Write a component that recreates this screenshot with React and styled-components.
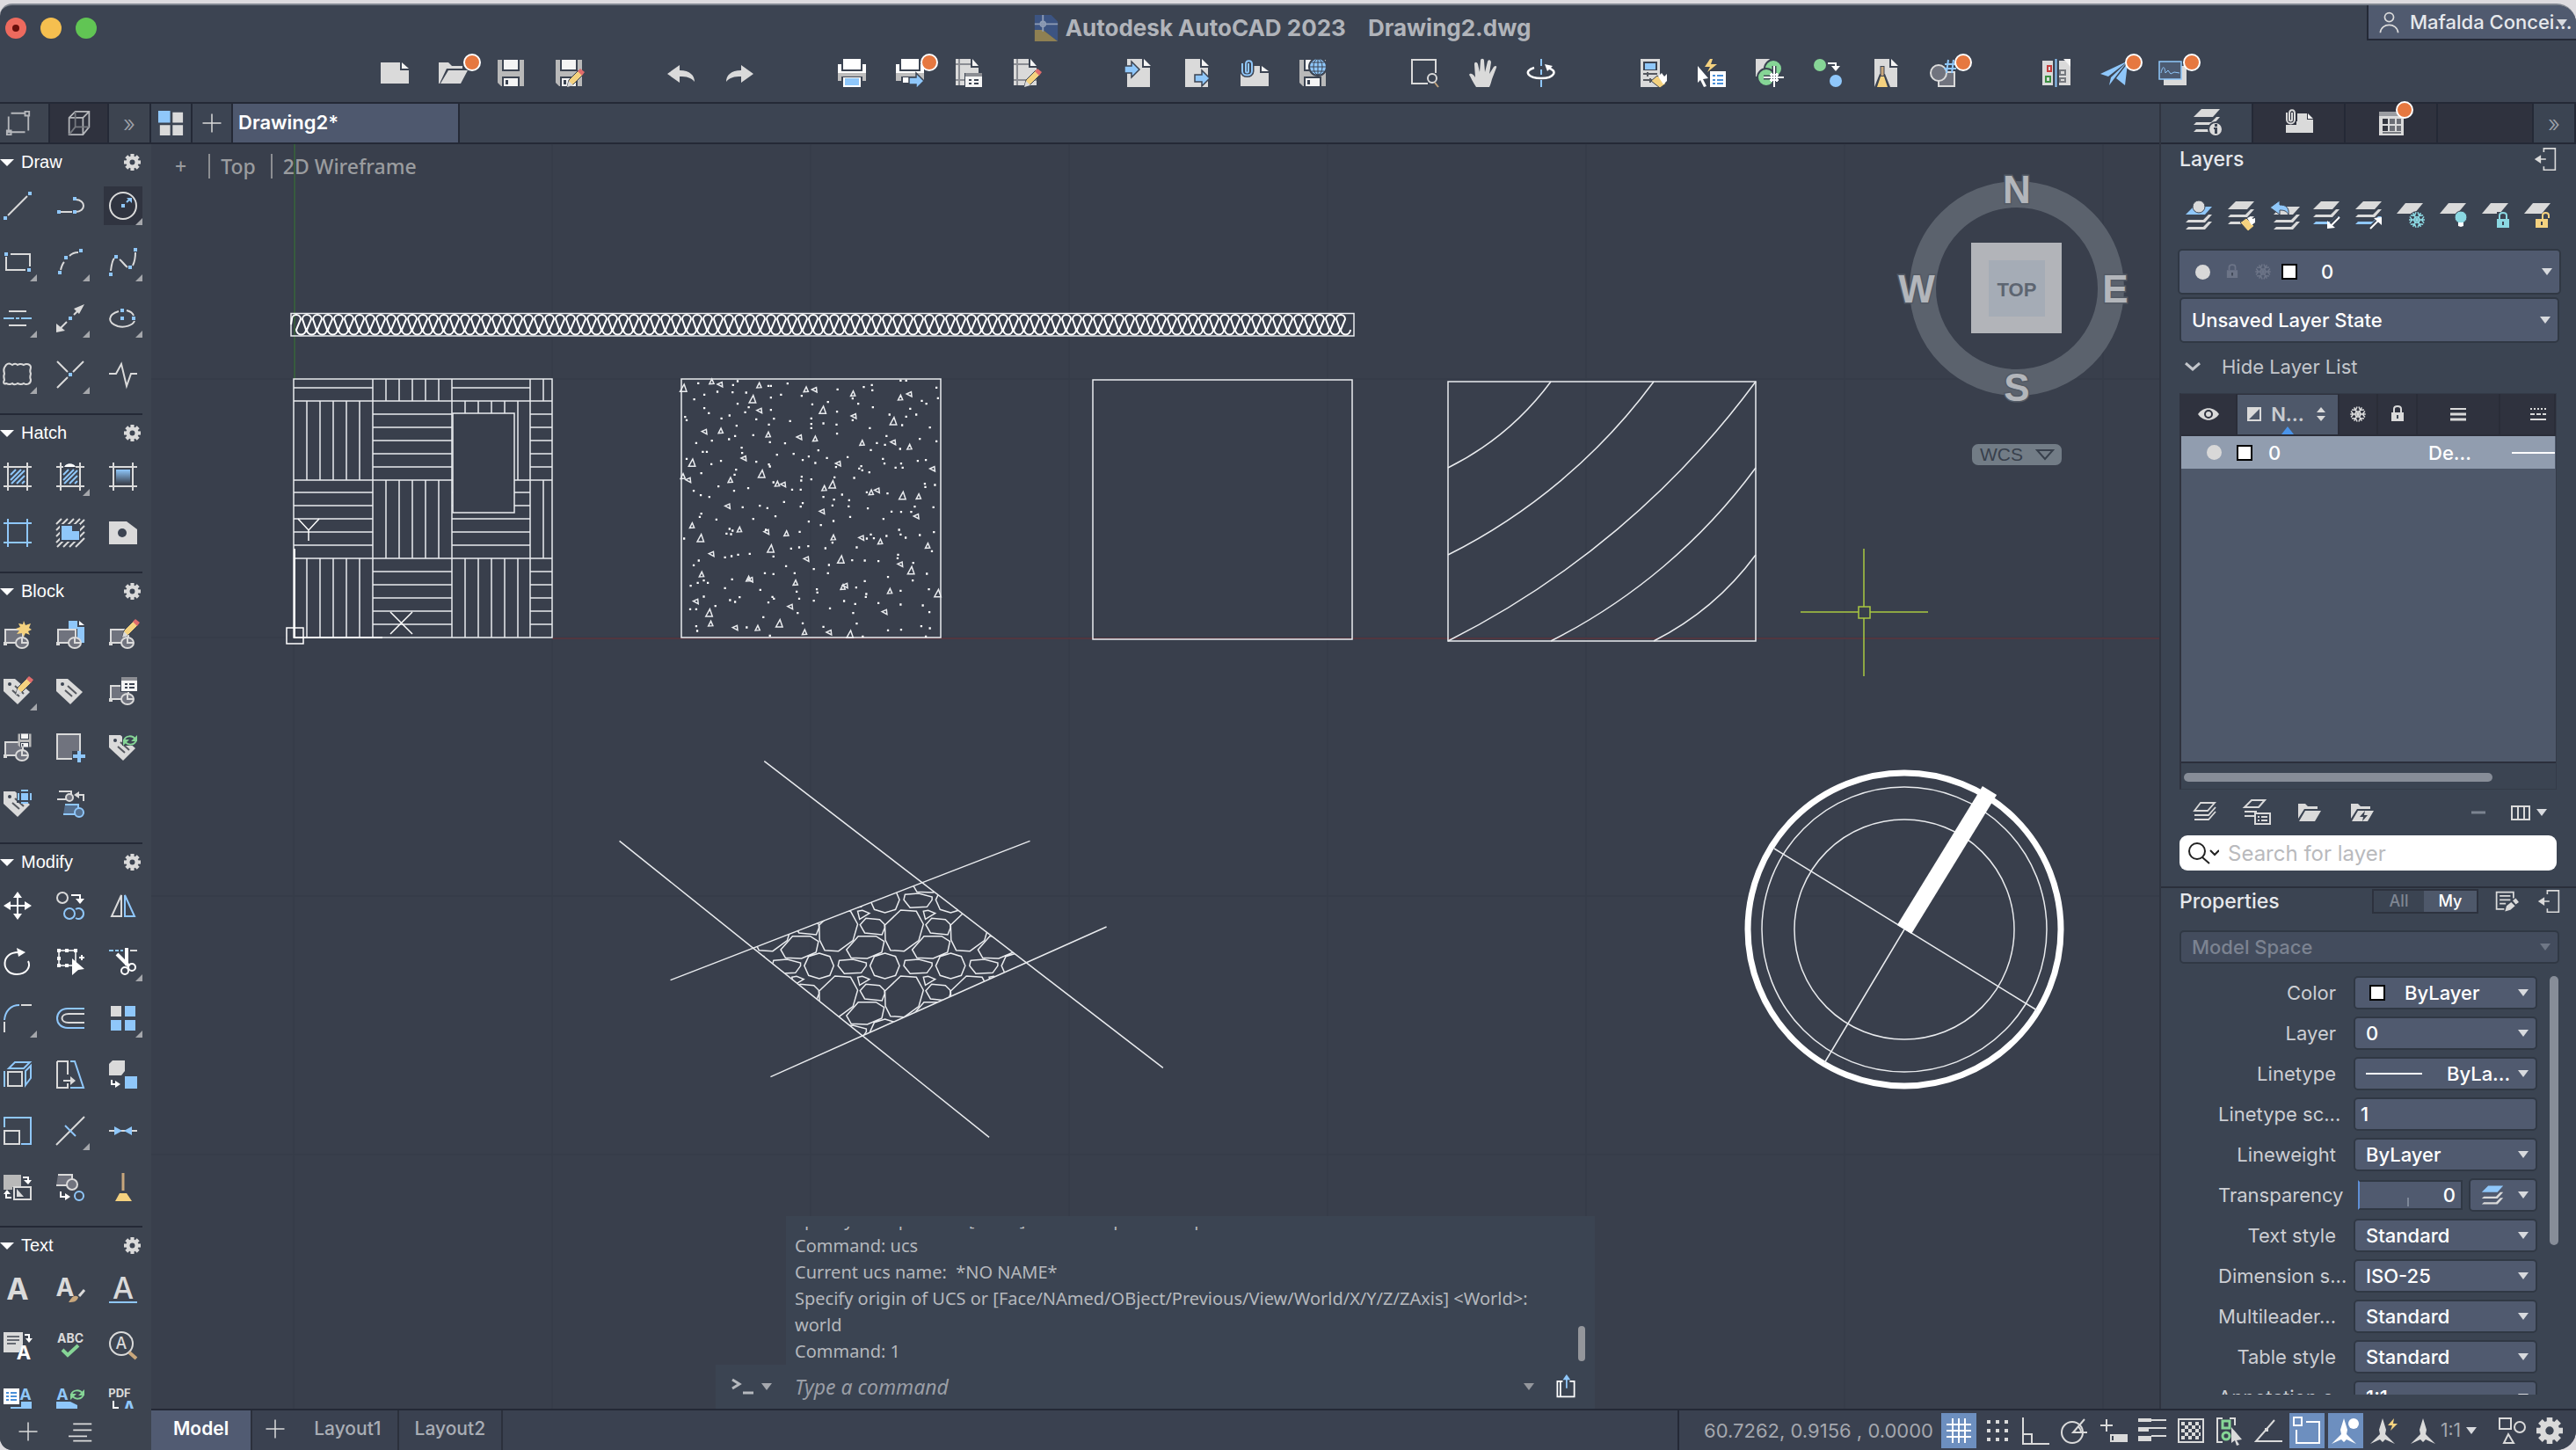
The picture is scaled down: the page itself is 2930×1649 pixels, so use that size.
import React from "react";
import styled, { createGlobalStyle, css } from "styled-components";

const W = "#dadada";
const B = "#8fc7fa";
const Y = "#f5d27f";
const R = "#e06c6c";
const G = "#86d596";
const T = "#8bd8e2";
const D = "#3c4452";
const M = "#70737e";

const GlobalStyle = createGlobalStyle`
  * {
    box-sizing: border-box;
  }
  body {
    margin: 0;
    background: #dddbdf;
    font-family: Inter, sans-serif;
    overflow: hidden;
  }
  button,
  input,
  select {
    font: inherit;
    color: inherit;
    margin: 0;
    padding: 0;
    border: 0;
    background: none;
  }
  svg {
    display: block;
  }
`;

/* ---------- icons ---------- */

const F = ({ d, c = W }) => <path d={d} fill={c} stroke="none" />;
const S = ({ d, c = W, w = 2 }) => <path d={d} fill="none" stroke={c} strokeWidth={w} />;
const Dots = ({ at, c = B }) =>
  at.map(([x, y]) => (
    <rect key={`${x}-${y}`} x={x - 2} y={y - 2} width="4" height="4" fill={c} stroke="none" />
  ));
const Letter = ({ x, y, size, c = W, bold, children }) => (
  <text
    x={x}
    y={y}
    fontSize={size}
    fill={c}
    stroke="none"
    fontWeight={bold ? 700 : 500}
    textAnchor="middle"
    fontFamily="Inter, sans-serif"
  >
    {children}
  </text>
);

const Floppy = () => (
  <>
    <F d="M1 1h30v30H5l-4-4z" c="#b9b9b9" />
    <F d="M6 1h20v13H6z" c={D} />
    <F d="M8 1h16v11H8z" c="#f4f4f4" />
    <F d="M6 20h20v11H6z" c={D} />
    <F d="M8 22h16v9H8z" c="#f4f4f4" />
    <F d="M10 24h3v5h-3z" c={D} />
  </>
);
const Page = () => (
  <>
    <F d="M3 0h17v10h9v22H3z" />
    <F d="M22 0l8 8h-8z" c="#f4f4f4" />
  </>
);
const Sheet = () => (
  <>
    <F d="M2 0h17v10h9v20H2z" />
    <S d="M6 0v30M2 6h17M2 24h26" c="#8b8d93" w={2} />
    <F d="M21 0l7 8h-7z" c="#f4f4f4" />
  </>
);
const Pencil = () => (
  <>
    <path d="M14 32l2-8L27 13l5 5L21 29z" fill={Y} stroke={D} strokeWidth="1" />
    <F d="M26 14l3-3 5 4-3 4z" c={R} />
    <F d="M14 32l2-7 5 5z" />
  </>
);
const Printer = () => (
  <>
    <F d="M6 0h20v12H6z" c="#fff" />
    <F d="M0 6h4v8h24V6h4v10H0z" c="#fff" />
    <F d="M0 16h32v9H0z" c="#bdbdbd" />
  </>
);
const RightArrow = ({ x, y }) => (
  <path
    d={`M${x} ${y - 4}h8v-5l9 9-9 9v-5h-8z`}
    fill={B}
    stroke={D}
    strokeWidth="1.5"
  />
);
const Stack = ({ top = W, mid = W, low = W }) => (
  <>
    <F d="M10 0h21l-8 9H1z" c={top} />
    <F d="M27 9h4l-8 9H1l3-3h17z" c={mid} />
    <F d="M27 17h4l-8 9H1l3-3h17z" c={low} />
  </>
);
const BlockShape = ({ c = W }) => (
  <>
    <path d="M2 10h20v15H2z" fill={M} stroke={c} strokeWidth="2" />
    <ellipse cx="21" cy="25" rx="7" ry="6" fill={M} stroke={c} strokeWidth="2" />
    <S d="M21 19v6h7" c={c} />
    <Dots at={[[2, 26]]} c={c} />
  </>
);
const Tag = () => (
  <>
    <F d="M0 2h13l17 15-14 14L0 16z" />
    <circle cx="7" cy="8" r="2" fill={D} stroke="none" />
    <S d="M13 10l10 9M10 15l8 7" c="#55585f" />
  </>
);
const Refresh = () => (
  <>
    <S d="M17 8c2-6 10-6 13-1M31 8c-2 6-10 6-13 1" c={G} />
    <F d="M32 2v7h-7zM16 14V7h7z" c={G} />
  </>
);
const HatchFrame = ({ c = W }) => <S d="M5 0v32M27 0v32M0 5h32M0 27h32" c={c} />;
const Flake = ({ x, y, r, c }) => (
  <g transform={`translate(${x} ${y}) scale(${r / 10})`} stroke={c} strokeWidth="1.7" fill="none">
    {[30, 90, 150].map((a) => (
      <path key={a} d="M0-10V10M-4-9L0-6L4-9M-4 9L0 6L4 9" transform={`rotate(${a})`} />
    ))}
    <path d="M4 0L2 3.500H-2L-4 0L-2-3.500H2z" />
  </g>
);
const Lock = ({ x, y, c, open }) => (
  <g transform={`translate(${x} ${y})`}>
    <F d="M0 7h14v10H0z" c={c} />
    <S d={open ? "M8 7V3c0-4 7-4 7 0v3" : "M3 7V3c0-4 8-4 8 0v4"} c={c} />
    <F d="M6 10h2v4H6z" c={D} />
  </g>
);
const Arrowhead = ({ c = W }) => <F d="M16 0l4 13-1 5 11 11-11-5-3 3-3-3-11 5 11-11-1-5z" c={c} />;
const Gear = () => (
  <>
    {[0, 45, 90, 135].map((a) => (
      <rect key={a} x="12.5" y="0" width="7" height="32" fill={W} stroke="none" transform={`rotate(${a} 16 16)`} />
    ))}
    <circle cx="16" cy="16" r="12" fill={W} stroke="none" />
    <circle cx="16" cy="16" r="5" fill={D} stroke="none" />
  </>
);

const glyphs = {
  newFile: (
    <>
      <F d="M0 4h22v9h10v15H0z" />
      <F d="M24 4l8 7h-8z" c="#f4f4f4" />
    </>
  ),
  open: (
    <>
      <F d="M0 4h11l4 4h12v3H9L1 28H0z" />
      <F d="M11 13h22l-8 15H2z" />
    </>
  ),
  save: <Floppy />,
  saveAs: (
    <>
      <Floppy />
      <Pencil />
    </>
  ),
  undo: <F d="M0 17L14 7v6c12 0 17 6 17 13-4-5-9-6-17-6v7z" />,
  redo: <F d="M32 17L18 7v6C6 13 1 19 1 26c4-5 9-6 17-6v7z" />,
  print: (
    <>
      <Printer />
      <F d="M4 20h24v12H4z" c={D} />
      <F d="M6 21h20v11H6z" c="#fff" />
      <F d="M8 22h16v8H8z" c={B} />
    </>
  ),
  plot: (
    <>
      <Printer />
      <F d="M6 20h20v7H6z" c={D} />
      <F d="M8 21h12v6H8z" c="#fff" />
      <RightArrow x={15} y={25} />
    </>
  ),
  batch: (
    <>
      <Sheet />
      <F d="M12 16h20v16H12z" c={D} />
      <F d="M13 16h19v4H13z" c="#8b8d93" />
      <F d="M13 20h19v12H13z" c="#f4f4f4" />
      <S d="M17 24h3M23 24h5M17 28h3M23 28h5" c={D} />
    </>
  ),
  pageSetup: (
    <>
      <Sheet />
      <Pencil />
    </>
  ),
  importFile: (
    <>
      <Page />
      <RightArrow x={0} y={12} />
    </>
  ),
  exportFile: (
    <>
      <Page />
      <RightArrow x={14} y={22} />
    </>
  ),
  attach: (
    <>
      <F d="M0 16h14V8h8v8h10v15H0z" />
      <F d="M24 8l8 6h-8z" c="#f4f4f4" />
      <path d="M9 5v9c0 2-3 2-3 0V6c0-5 7-5 7 0v8c0 6-11 6-11 0V5" stroke={D} strokeWidth="5" />
      <S d="M9 5v9c0 2-3 2-3 0V6c0-5 7-5 7 0v8c0 6-11 6-11 0V5" c={B} />
    </>
  ),
  saveWeb: (
    <>
      <Floppy />
      <circle cx="22" cy="9" r="10" fill={B} stroke={D} strokeWidth="2" />
      <S d="M22 0v18M13 9h18M15 4h14M15 14h14" c={D} w={1} />
      <ellipse cx="22" cy="9" rx="5" ry="9" stroke={D} strokeWidth="1" />
    </>
  ),
  zoomWindow: (
    <>
      <S d="M19 28H1V1h27v15" />
      <circle cx="24" cy="22" r="5" />
      <S d="M27 27l4 5" c="#c2a37c" />
    </>
  ),
  pan: (
    <F d="M8 32C4 26 2 21 0 18c1-2 4-2 7 3L6 6c0-3 3-3 4 0l2 9L13 2c0-3 4-3 4 0l1 13 3-12c1-3 4-2 4 1l-2 13 5-8c2-2 4-1 3 1l-5 13c-1 4-2 7-3 9z" />
  ),
  orbit: (
    <>
      <S d="M16 0v8M16 12v6M16 24v8" c={B} />
      <S d="M8 10C-5 14 1 22 16 22s20-9 7-12" c="#fff" w={2.5} />
      <F d="M20 6l9 2-6 6z" c="#fff" />
    </>
  ),
  properties: (
    <>
      <F d="M1 0h22v32H1z" />
      <F d="M4 3h16v10H4z" c={D} />
      <F d="M6 5h12v7H6z" c={B} />
      <S d="M4 17h16M4 24h10M9 15v5M12 22v5" c="#55585f" />
      <path d="M13 25l7-6 10 9-7 5z" fill={Y} stroke={D} strokeWidth="1" />
      <F d="M21 20l4-4 3 4 3-3v8l-4 4z" c="#fff" />
    </>
  ),
  quickSelect: (
    <>
      <F d="M14 14h18v18H14z" c="#fff" />
      <S d="M17 19h3M17 24h3M17 28h3M22 19h7M22 24h7M22 28h7" c="#4a90d9" />
      <F d="M0 8l12 14-6 1 4 8-3 1-4-8-3 3z" c="#fff" />
      <F d="M17 0h-3L8 9h6l-3 6L22 6h-7z" c={Y} />
    </>
  ),
  group: (
    <>
      <F d="M0 0h16L3 20H0z" />
      <circle cx="20" cy="11" r="10" fill={G} stroke={D} />
      <circle cx="12" cy="21" r="10" fill={G} stroke={D} />
      <S d="M21 8v24M9 21h23" c={D} w={5} />
      <S d="M21 8v24M9 21h23M18 16v10M24 16v10M16 18h10M16 24h10" c="#fff" />
    </>
  ),
  copyBlock: (
    <>
      <circle cx="7" cy="7" r="7" fill={G} stroke="none" />
      <circle cx="25" cy="25" r="7" fill={B} stroke="none" />
      <S d="M16 5h9v4" c="#fff" />
      <F d="M20 8h10l-5 6z" c="#fff" />
    </>
  ),
  purge: (
    <>
      <Page />
      <S d="M12 8v12" c={D} w={5} />
      <F d="M9 17h6l6 15H3z" c={D} />
      <S d="M12 9v10" c="#c9a77c" w={3} />
      <F d="M10 20h4l4 12H6z" c={Y} />
    </>
  ),
  count: (
    <>
      <rect x="10" y="15" width="18" height="16" fill={M} />
      <circle cx="10" cy="16" r="9" fill={M} />
      <S d="M21 1l-2 15M27 1l-2 15M17 6h14M16 11h14" c={B} />
    </>
  ),
  compare: (
    <>
      <F d="M0 2h32v28H0z" />
      <S d="M6 8h4v6H6z" c="#c43d3d" />
      <S d="M4 20h5v6H4z" c="#3c8f42" />
      <S d="M20 13h6v5h-6zM20 22h6v4h-6z" c="#777a80" />
      <F d="M12 2h7v28h-7z" c={D} />
      <S d="M15.5 0v32" c={B} />
      <F d="M24 0h8v9z" c="#f4f4f4" />
    </>
  ),
  share: <F d="M0 17L32 2 9 20zM12 21L30 4l-14 18-6 8zM18 22L31 5l-3 25z" c={B} />,
  activity: (
    <>
      <F d="M6 8h26v22H6z" />
      <rect x="1" y="3" width="25" height="20" fill="#4c5a70" stroke={B} strokeWidth="1.5" />
      <S d="M3 16c2-9 4-8 5 0l3-3 3 4 4-2 6 1" c={B} w={1} />
    </>
  ),
  drafting: <S d="M7 5h17M28 8v18M24 28H4V9M24 3h5v5h-5zM2 26h5v5H2z" c="#b5b7bb" />,
  cube: (
    <>
      <S d="M3 9l8-8h18v20l-8 10H3zM3 9h18v22M21 9l8-8" c="#b5b7bb" />
      <S d="M11 1v20h18M11 21l-8 10" c="#777a80" />
    </>
  ),
  startGrid: (
    <>
      <F d="M0 0h15v15H0z" c={B} />
      <F d="M18 2h13v13H18zM2 18h13v13H2zM18 18h13v13H18z" />
    </>
  ),
  plus: <S d="M16 2v28M2 16h28" />,
  line: (
    <>
      <S d="M5 27L27 5" />
      <Dots at={[[2, 30], [30, 2]]} />
    </>
  ),
  polyline: (
    <>
      <S d="M5 23h13M22 9c12 0 12 14 0 14" />
      <Dots at={[[3, 23], [21, 23], [21, 8]]} />
    </>
  ),
  circle: (
    <>
      <circle cx="16" cy="16" r="15" />
      <Dots at={[[16, 16]]} />
      <S d="M20 12l3-3" c={B} />
      <F d="M20 7h6v6z" c={B} />
    </>
  ),
  rect: (
    <>
      <S d="M3 10v15h22M8 7h22v14" />
      <Dots at={[[3, 7], [29, 25]]} />
    </>
  ),
  arc: (
    <>
      <S d="M5 25c1-4 2-7 4-9M15 9c3-3 6-4 10-4" />
      <Dots at={[[4, 28], [11, 11], [28, 3]]} />
    </>
  ),
  spline: (
    <>
      <S d="M2 26c1-8 2-13 4-14M12 13c3 2 5 6 9 9M27 20c2-4 3-8 3-15" />
      <Dots at={[[2, 30], [8, 10], [24, 22], [30, 2]]} />
    </>
  ),
  centerline: (
    <>
      <S d="M6 8h20M6 24h20" />
      <S d="M0 16h12M14 16h4M20 16h12" c={B} />
    </>
  ),
  ray: (
    <>
      <S d="M4 28l8-8M20 12l8-8" />
      <F d="M0 32V22l10 8zM32 0L20 5l6 6z" />
      <Dots at={[[16, 16]]} />
    </>
  ),
  ellipse: (
    <>
      <path d="M11 8C-2 12-2 21 10 25c8 2 17-1 19-6M20 7c4 1 7 3 8 6" />
      <Dots at={[[15, 7], [15, 16], [28, 16]]} />
    </>
  ),
  revcloud: (
    <path
      d="M3 5c3-3 5-1 7 0 3-2 5-1 6 0 3-2 5-1 7 0 3-2 8-1 8 3-1 3-1 5 0 7-1 3-1 5 0 7 0 5-5 6-8 4-3 2-5 1-7 0-3 2-5 1-6 0-3 2-5 1-7 0-2 1-4 0-2-4-1-3-1-5 0-7-1-3-1-5 0-7z"
    />
  ),
  point: (
    <>
      <S d="M1 1l12 12M1 31l12-12M19 13L31 1" />
      <Dots at={[[16, 16]]} />
    </>
  ),
  breakline: <S d="M0 15h8l6-11 6 25 5-14h7" />,
  hatch: (
    <>
      <HatchFrame />
      <S d="M8 14l6-6M8 20L20 8M9 24L24 9M15 24l9-9M21 24l3-3" c={B} />
    </>
  ),
  hatchEdit: (
    <>
      <HatchFrame />
      <F d="M8 0h14v7H8z" c={D} />
      <F d="M9 5c2-5 11-5 13 0z" c="#fff" />
      <S d="M8 14l6-6M8 20L20 8M9 24L24 9M15 24l9-9M21 24l3-3" c={B} />
    </>
  ),
  gradient: (
    <>
      <HatchFrame />
      <defs>
        <linearGradient id="grad" x1="0" x2="0" y1="0" y2="1">
          <stop offset="0" stopColor={B} />
          <stop offset="1" stopColor={D} />
        </linearGradient>
      </defs>
      <rect x="8" y="8" width="16" height="16" fill="url(#grad)" stroke="none" />
    </>
  ),
  boundary: <HatchFrame c={B} />,
  wipeout: (
    <>
      <S d="M0 6l6-6M0 13L13 0M0 20L20 0M0 27L27 0M1 32L32 1M8 32L32 8M15 32l17-17M22 32l10-10" />
      <F d="M4 6h23v20H4z" c={D} />
      <F d="M6 8h12v6h8v10H6z" c={B} />
    </>
  ),
  region: (
    <>
      <F d="M0 3h20l12 9v17H0z" />
      <circle cx="15" cy="16" r="5" fill={D} stroke="none" />
    </>
  ),
  createBlock: (
    <>
      <BlockShape />
      <F d="M23 0l2 5 6-2-2 5 3 2-4 2 2 4-5-2-2 4-2-4-6 1 3-4-4-2 5-2-2-4 5 1z" c={Y} />
    </>
  ),
  insertBlock: (
    <>
      <F d="M14 0h10v7h8v18h-8V9H14z" c={B} />
      <F d="M26 0l6 5h-6z" c="#fff" />
      <BlockShape />
    </>
  ),
  editBlock: (
    <>
      <BlockShape />
      <g transform="translate(1 -13)">
        <Pencil />
      </g>
    </>
  ),
  editAttr: (
    <>
      <Tag />
      <g transform="translate(0 -12)">
        <Pencil />
      </g>
    </>
  ),
  tag: <Tag />,
  blockProps: (
    <>
      <BlockShape />
      <F d="M13 0h19v17H13z" c={D} />
      <F d="M14 0h18v4H14z" c="#8b8d93" />
      <F d="M14 4h18v12H14z" c="#f4f4f4" />
      <S d="M18 8h3M23 8h6M18 12h3M23 12h6" c={D} />
    </>
  ),
  saveBlock: (
    <>
      <BlockShape />
      <g transform="translate(16 0) scale(.5)">
        <Floppy />
      </g>
    </>
  ),
  addBlock: (
    <>
      <rect x="1" y="1" width="26" height="28" fill={M} />
      <F d="M18 20h14v12H18z" c={D} />
      <F d="M24 20h4v4h5v4h-5v5h-4v-5h-5v-4h5z" c={B} />
    </>
  ),
  syncAttr: (
    <>
      <Tag />
      <F d="M15 0h17v14H15z" c={D} />
      <Refresh />
    </>
  ),
  attrView: (
    <>
      <Tag />
      <F d="M15 0h17v15H15z" c={D} />
      <F d="M20 4h8v8h-8z" c={B} />
      <S d="M17 4v8M31 4v8M20 1h8M20 15h8" c={B} />
    </>
  ),
  replaceBlock: (
    <>
      <S d="M3 2h14v9H1M22 6h9v7" />
      <circle cx="15" cy="9" r="4" fill={M} />
      <F d="M20 6l6-4v8z" />
      <path d="M10 17h15v11H8" fill="#55708f" stroke={B} />
      <circle cx="26" cy="26" r="5" fill="#55708f" stroke={B} />
    </>
  ),
  move: (
    <>
      <S d="M16 4v24M4 16h24" c="#fff" />
      <F d="M16 0l5 7H11zM16 32l5-7H11zM0 16l8-5v10zM32 16l-8-5v10z" c="#fff" />
    </>
  ),
  copy: (
    <>
      <circle cx="7" cy="7" r="6" />
      <S d="M17 4h10v4" c="#fff" />
      <F d="M22 8h10l-5 6z" c="#fff" />
      <circle cx="15" cy="25" r="6" stroke={B} />
      <path d="M22 20c5-3 9 1 9 5s-4 8-9 5" stroke={B} />
    </>
  ),
  mirror: (
    <>
      <S d="M14 4v24H3z" />
      <S d="M18 4v24h11z" c={B} />
    </>
  ),
  rotate: (
    <>
      <S d="M18 5C-4 4-3 30 15 30c12 0 16-9 13-15" c="#fff" />
      <F d="M15 0l10 5-8 5z" c="#fff" />
    </>
  ),
  scaleSel: (
    <>
      <S d="M3 3h19v17H3z" c="#fff" w={1.5} />
      <Dots at={[[3, 3], [12, 3], [22, 3], [3, 12], [3, 20], [12, 20]]} c="#fff" />
      <F d="M18 12l14 12-7 1-7 6z" c="#fff" />
      <S d="M26 11h6M29 8v6" c="#fff" />
    </>
  ),
  trim: (
    <>
      <S d="M0 3h5M7 3h4M13 3h3" c={B} />
      <S d="M24 3h8" />
      <S d="M9 7l14 14M20 0v20" c="#fff" w={4} />
      <circle cx="18" cy="26" r="4" stroke="#fff" />
      <circle cx="26" cy="22" r="4" stroke="#fff" />
    </>
  ),
  fillet: (
    <>
      <S d="M1 18C2 8 8 1 18 1" c={B} />
      <S d="M20 1h12M1 20v12" />
    </>
  ),
  offset: (
    <>
      <S d="M32 5H13C-3 5-3 27 13 27h19" c={B} />
      <S d="M32 11H14c-10 0-10 10 0 10h18" />
    </>
  ),
  array: (
    <>
      <F d="M2 2h12v12H2z" />
      <F d="M18 2h12v12H18zM2 18h12v12H2zM18 18h12v12H18z" c={B} />
    </>
  ),
  stretch3d: (
    <>
      <S d="M5 13h16v16H5z" />
      <S d="M6 9l7-7h17l-7 7zM25 12l6-6v14l-6 8zM1 12v18" c={B} />
    </>
  ),
  stretch: (
    <>
      <S d="M1 1h12v15M13 26v5H1V1M8 23h9" />
      <F d="M16 18l6 5-6 5z" />
      <S d="M16 1h5l10 30H16" c={B} />
    </>
  ),
  draworder: (
    <>
      <F d="M0 4l4-4h14v12l-4 5H0z" />
      <F d="M18 18h14v14H18z" c={B} />
      <S d="M3 22v5h5" c="#fff" />
      <F d="M7 23l6 4-6 4z" c="#fff" />
    </>
  ),
  scale: (
    <>
      <S d="M1 12V1h30v30H20" c={B} />
      <S d="M1 16h17v15H1z" />
    </>
  ),
  breakAt: (
    <>
      <S d="M0 32L32 0" />
      <S d="M10 10l12 12" c={B} />
    </>
  ),
  join: (
    <>
      <S d="M0 16h32" />
      <F d="M6 11l9 5-9 5zM26 11l-9 5 9 5z" c={B} />
    </>
  ),
  changeSpace: (
    <>
      <F d="M0 2h20v14H10v3H0z" c="#b9b9b9" />
      <S d="M12 16h19v14H12z" />
      <F d="M15 18v9h8z" />
      <S d="M22 5h6v4M3 22v6h6" c="#fff" />
      <F d="M23 8h9l-4 5zM0 24l4-5 4 5z" c="#fff" />
    </>
  ),
  extract: (
    <>
      <path d="M2 2h16v12H0" fill={M} />
      <circle cx="18" cy="13" r="6" fill={M} />
      <S d="M5 21v6h7" c="#fff" />
      <F d="M10 23l6 4-6 4z" c="#fff" />
      <circle cx="26" cy="26" r="5" stroke={B} />
    </>
  ),
  broom: (
    <>
      <S d="M16 0v20" c="#c9a77c" w={3} />
      <F d="M12 23h8l6 9H7z" c={Y} />
    </>
  ),
  text: <Letter x={16} y={28} size={34} bold>A</Letter>,
  textStyle: (
    <>
      <Letter x={10} y={24} size={28} bold>A</Letter>
      <S d="M32 17l-6 7" w={3} />
      <F d="M14 31c4-7 7-9 11-6-1 5-5 6-11 6z" c="#c9a77c" />
    </>
  ),
  textUnder: (
    <>
      <Letter x={16} y={27} size={34}>A</Letter>
      <S d="M0 31h32" c={B} />
    </>
  ),
  textConvert: (
    <>
      <F d="M0 1h22v23H0z" />
      <S d="M4 6h14M4 10h14M4 14h10" c="#666a72" />
      <path d="M23 13l-9 19h18z" fill={D} stroke="none" />
      <Letter x={23} y={32} size={22} c="#fff" bold>A</Letter>
      <S d="M24 4h5v5" c="#fff" />
      <F d="M25 8h8l-4 5z" c="#fff" />
    </>
  ),
  spell: (
    <>
      <Letter x={16} y={13} size={14} bold>ABC</Letter>
      <S d="M7 21l6 6L25 16" c={G} w={4} />
    </>
  ),
  findText: (
    <>
      <circle cx="14" cy="14" r="13" />
      <Letter x={14} y={20} size={18}>A</Letter>
      <S d="M23 24l8 7" c="#c9a77c" w={4} />
    </>
  ),
  fieldText: (
    <>
      <F d="M0 1h18v18H0z" c="#fff" />
      <S d="M3 6h3M3 10h3M3 14h3M8 6h7M8 10h7M8 14h7" c="#4a90d9" />
      <Letter x={25} y={14} size={18} c={B} bold>A</Letter>
      <F d="M20 16h12v16H8V22h12z" c={B} />
    </>
  ),
  updateText: (
    <>
      <Letter x={7} y={14} size={18} c={B} bold>A</Letter>
      <F d="M0 16h16l8 4v12H0z" c={B} />
      <Refresh />
    </>
  ),
  pdfText: (
    <>
      <Letter x={12} y={11} size={13} bold>PDF</Letter>
      <S d="M5 15v8h6" c="#fff" />
      <Letter x={23} y={30} size={20} c={B} bold>A</Letter>
    </>
  ),
  gear: <Gear />,
  listMenu: <S d="M6 6h24M6 14h24M0 22h24M6 28h24" />,
  layersInfo: (
    <>
      <Stack />
      <circle cx="26" cy="23" r="8" fill={W} stroke={D} />
      <F d="M25 17h3v3h-3zM24 21h4v7h-3v-5h-1z" c={D} />
    </>
  ),
  refs: (
    <>
      <F d="M1 14h13V5h11v7h7v15H1z" />
      <F d="M26 5l6 6h-6z" c="#f4f4f4" />
      <F d="M0 0h13v18H0z" c="#2f323e" />
      <F d="M1 19h14v8H1z" />
      <S d="M8 4v8c0 2-3 2-3 0V5c0-5 6-5 6 0v7c0 6-9 6-9 0V4" />
    </>
  ),
  palette: (
    <>
      <F d="M2 3h28v5H2z" c="#9a9ca1" />
      <F d="M2 8h28v22H2z" />
      <F d="M6 11h6v6H6zM6 19h6v6H6z" c="#33363f" />
      <F d="M14 11h6v6h-6zM22 11h5v6h-5zM14 19h6v6h-6zM22 19h5v6h-5z" c="#6c6f76" />
      <S d="M6 27h21" c="#777a80" />
    </>
  ),
  dock: (
    <>
      <S d="M14 6V1h16v30H14v-5M5 16h12" />
      <F d="M1 16l9-6v12z" />
    </>
  ),
  layerCurrent: (
    <>
      <g transform="translate(0 6)">
        <Stack top={B} />
      </g>
      <circle cx="16" cy="6" r="7" fill={W} stroke={D} strokeWidth="1" />
    </>
  ),
  layerMatch: (
    <>
      <Stack />
      <path d="M15 24l7-5 9 9-7 6z" fill={Y} stroke={D} strokeWidth="1" />
      <F d="M23 19l4-2 2 3 3-1v5l-4 3z" c="#fff" />
    </>
  ),
  layerPrev: (
    <>
      <g transform="translate(3 6)">
        <Stack />
      </g>
      <path d="M0 7l11-8v5c7 0 11 3 10 11-2-4-5-5-10-5v5z" fill={B} stroke={D} strokeWidth="1" />
    </>
  ),
  layerIso: (
    <>
      <Stack low={B} />
      <S d="M30 18l-9 9" c={D} w={6} />
      <S d="M31 18l-9 9" c="#fff" />
      <F d="M17 31v-9l9 8z" c="#fff" />
    </>
  ),
  layerUniso: (
    <>
      <Stack low={B} />
      <S d="M19 30l9-9" c={D} w={6} />
      <S d="M18 31l9-9" c="#fff" />
      <F d="M31 18v9l-9-8z" c="#fff" />
    </>
  ),
  layerFreeze: (
    <>
      <F d="M10 2h20l-10 12H0z" />
      <circle cx="23" cy="21" r="10" fill={D} stroke="none" />
      <Flake x={23} y={21} r={9} c={T} />
    </>
  ),
  layerOff: (
    <>
      <F d="M10 2h20l-10 12H0z" />
      <circle cx="24" cy="18" r="7" fill={T} stroke={D} strokeWidth="1" />
      <F d="M21 24h6v4l-3 1-3-1z" c="#fff" />
    </>
  ),
  layerLock: (
    <>
      <F d="M10 2h20l-10 12H0z" />
      <F d="M17 12h14v8H17z" c={D} />
      <Lock x={17} y={13} c={T} />
    </>
  ),
  layerUnlock: (
    <>
      <F d="M10 2h20l-10 12H0z" />
      <Lock x={13} y={13} c={Y} open />
    </>
  ),
  lock: <Lock x={9} y={7} c={W} />,
  lockDim: <Lock x={9} y={7} c="#6c7487" />,
  flake: <Flake x={16} y={16} r={10} c={W} />,
  flakeDim: <Flake x={16} y={16} r={10} c="#6c7487" />,
  eye: (
    <>
      <F d="M4 16c6-9 18-9 24 0-6 9-18 9-24 0z" />
      <circle cx="16" cy="16" r="4" fill={W} stroke="#2f323e" strokeWidth="2" />
    </>
  ),
  nameBox: (
    <>
      <S d="M9 9h14v14H9z" />
      <F d="M9 9h14L9 23z" />
    </>
  ),
  sort: <F d="M16 8l5 6H11zM16 24l5-6H11z" />,
  weight: (
    <>
      <S d="M7 10h18" />
      <S d="M7 16h18M7 22h18" w={3} />
    </>
  ),
  linetype: <S d="M7 10h2m2 0h2m2 0h2m2 0h2m2 0h2M7 16h5m2 0h5m2 0h4M7 22h18" />,
  newLayer: <S d="M12 5h16l-8 9H5zM5 19h16l8-9M5 24h16l8-9" w={1.8} />,
  layerStates: (
    <>
      <S d="M10 2h15l-7 8H2zM2 15h14M2 20h12" w={2} />
      <rect x="14" y="17" width="17" height="12" fill={D} />
      <S d="M17 21h2M21 21h7M17 25h2M21 25h7" />
    </>
  ),
  folder: <F d="M3 6h8l3 3h11v3H10L3 23zM11 14h18l-7 12H4z" />,
  folderZap: (
    <>
      <F d="M3 6h8l3 3h11v3H10L3 23zM11 14h18l-7 12H4z" />
      <F d="M19 14l-6 7h4l-1 5 6-7h-4z" c={D} />
    </>
  ),
  minus: <S d="M8 16h16" c="#7c8491" w={3} />,
  columns: <S d="M6 9h20v15H6zM13 9v15M20 9v15" w={2} />,
  notes: (
    <>
      <S d="M25 12V4H3v22h10M7 9h14M7 14h14M7 19h8" />
      <F d="M14 29l2-7 6-5 5 5-6 5zM24 15l4-3 4 5-4 3z" />
    </>
  ),
  grid: <S d="M9 2v28M16 2v28M23 2v28M2 9h28M2 16h28M2 23h28" c="#fff" />,
  snapGrid: <Dots at={[[6, 6], [16, 6], [26, 6], [6, 16], [16, 16], [26, 16], [6, 26], [16, 26], [26, 26]]} c={W} />,
  ortho: <S d="M1 1v30h30M1 20h10v11" />,
  polar: (
    <>
      <circle cx="13" cy="18" r="12" />
      <S d="M27 3L14 18h16M19 11c3 2 4 4 4 7" />
    </>
  ),
  dynInput: (
    <>
      <S d="M8 3v14M1 10h14" />
      <F d="M12 20h20v9H12z" />
      <S d="M15 22v5" c={D} />
    </>
  ),
  lineweight: (
    <>
      <F d="M0 2h15v4H0zM0 12h12v5H0zM0 22h15v6H0z" />
      <S d="M15 4h17M12 13h20M15 22h17" />
    </>
  ),
  checker: (
    <>
      <S d="M2 3h28v26H2z" />
      {[0, 1, 2, 3, 4].map((r) =>
        [0, 1, 2].map((c) => (
          <rect key={`${r}${c}`} x={5 + c * 8 + (r % 2) * 4} y={6 + r * 4} width={c === 2 && r % 2 ? 2 : 4} height="4" fill={W} stroke="none" />
        ))
      )}
    </>
  ),
  cycling: (
    <>
      <S d="M8 2H2v27h6M16 2h6v8" />
      <S d="M8 5h8v8H8z" c={G} w={3} />
      <circle cx="12" cy="22" r="4" stroke={G} strokeWidth="3" />
      <F d="M18 12l12 14-6 1 3 5-3 1-2-6-4 3z" />
    </>
  ),
  angle: (
    <>
      <S d="M23 4L2 28h30" />
      <Dots at={[[14, 15]]} c={W} />
    </>
  ),
  osnap: (
    <>
      <S d="M15 6h15v24H4V15" c="#fff" />
      <S d="M1 1h9v9H1z" c="#fff" />
    </>
  ),
  annoVisible: (
    <>
      <g transform="translate(-2 2)">
        <Arrowhead c="#fff" />
      </g>
      <circle cx="25" cy="8" r="6" fill="#fff" stroke="none" />
    </>
  ),
  annoAuto: (
    <>
      <g transform="translate(-2 2)">
        <Arrowhead />
      </g>
      <F d="M27 2l-7 8h5l-2 6 8-8h-5z" c={Y} />
    </>
  ),
  annoScale: (
    <g transform="translate(0 2)">
      <Arrowhead />
    </g>
  ),
  workspace: (
    <>
      <S d="M3 2h13v12H3zM13 20l6 10H8z" />
      <circle cx="26" cy="12" r="6" />
    </>
  ),
  user: (
    <>
      <circle cx="16" cy="9" r="6" />
      <S d="M4 30c1-14 23-14 24 0" />
    </>
  ),
  shareBox: (
    <>
      <S d="M12 9H5v20h22V9h-6M9 9v20" c="#fff" />
      <S d="M17 4v14" c={B} />
      <F d="M17 0l5 7H12z" c={B} />
    </>
  ),
  appFile: (
    <>
      <F d="M2 0h20l8 8v24L12 18H2z" c="#3c5482" />
      <F d="M2 18h10l18 14H2z" c="#8f8052" />
      <S d="M12 0v20M2 11h28" c="#8f9db5" />
      <circle cx="12" cy="11" r="3" stroke="#8f9db5" />
    </>
  ),
  byLayer: (
    <g transform="translate(0 3)">
      <Stack top={B} />
    </g>
  ),
};

const Glyph = styled.svg`
  flex: none;
  overflow: visible;
`;

const Icon = ({ name, size = 32 }) => (
  <Glyph viewBox="0 0 32 32" width={size} height={size} fill="none" stroke={W} strokeWidth="2" aria-hidden="true">
    {glyphs[name]}
  </Glyph>
);

const Caret = styled.span`
  flex: none;
  width: 0;
  height: 0;
  border: 6px solid transparent;
  border-top: 8px solid ${({ $color }) => $color || "#d8dade"};
  border-bottom: 0;
`;

/* ---------- window ---------- */

const Window = styled.div`
  display: flex;
  flex-direction: column;
  height: 100vh;
  padding-top: 4px;
`;

const Frame = styled.div`
  flex: 1;
  min-height: 0;
  display: flex;
  flex-direction: column;
  overflow: hidden;
  border-top: 2px solid #7f858f;
  border-radius: 14px 22px 22px 14px;
  background: #3c4452;
  color: #e6e8ec;
`;

const TitleBar = styled.header`
  display: grid;
  grid-template-columns: 1fr auto 1fr;
  align-items: center;
  height: 51px;
`;

const Lights = styled.div`
  display: flex;
  gap: 16px;
  padding-left: 6px;
`;

const Light = styled.button`
  display: grid;
  place-items: center;
  width: 24px;
  height: 24px;
  border-radius: 50%;
  background: ${({ $color }) => $color};
  &::after {
    content: "";
    width: 8px;
    height: 8px;
    border-radius: 50%;
    background: ${({ $dot }) => $dot || "transparent"};
  }
`;

const Title = styled.h1`
  display: flex;
  align-items: center;
  gap: 7px;
  margin: 0 14px 0 0;
  font-size: 26px;
  font-weight: 700;
  color: #b1b4ba;
  span + span {
    margin-left: 18px;
  }
`;

const Account = styled.button`
  position: relative;
  display: flex;
  align-items: center;
  align-self: start;
  justify-self: end;
  gap: 10px;
  width: 238px;
  height: 40px;
  padding-left: 10px;
  border: solid #242936;
  border-width: 0 0 2px 2px;
  background: #505a6f;
  font-size: 22px;
  font-weight: 500;
  white-space: nowrap;
  ${Caret} {
    position: absolute;
    right: 10px;
    top: 16px;
  }
`;

const Toolbar = styled.div`
  display: flex;
  justify-content: center;
  gap: 96px;
  height: 61px;
  padding: 10px 10px 0 0;
  border-bottom: 2px solid #242936;
`;

const ToolGroup = styled.div`
  display: flex;
  gap: 34px;
`;

const ToolButton = styled.button`
  position: relative;
  width: 32px;
  height: 32px;
`;

const Badge = styled.i`
  position: absolute;
  right: -${({ $inset }) => ($inset ? 9 : 16)}px;
  top: -${({ $inset }) => ($inset ? 9 : 6)}px;
  width: 20px;
  height: 20px;
  border: 2px solid #fff;
  border-radius: 50%;
  background: #e67840;
`;

const Body = styled.div`
  flex: 1;
  min-height: 0;
  display: flex;
`;

const TabStrip = styled.div`
  flex: none;
  display: flex;
  height: 46px;
  border-bottom: 2px solid #242936;
`;

const Tab = styled.button`
  display: flex;
  align-items: center;
  justify-content: ${({ $left }) => ($left ? "flex-start" : "center")};
  width: ${({ $width }) => $width}px;
  flex: ${({ $grow }) => ($grow ? "1" : "none")};
  position: relative;
  padding: ${({ $left }) => ($left ? "0 6px 2px" : "0")};
  border-right: 2px solid #242936;
  background: ${({ $bg }) => $bg || "transparent"};
  color: ${({ $dim }) => ($dim ? "#9da1a9" : "#fff")};
  font-size: ${({ $dim }) => ($dim ? 26 : 22)}px;
  font-weight: ${({ $dim }) => ($dim ? 300 : 600)};
`;

/* ---------- tool palette ---------- */

const Palette = styled.aside`
  flex: none;
  display: flex;
  flex-direction: column;
  width: 172px;
  background: #3d4450;
`;

const PaletteBody = styled.div`
  flex: 1;
  min-height: 0;
  overflow: hidden;
`;

const Section = styled.section`
  width: 162px;
  padding-bottom: 12px;
  border-bottom: 2px solid #242936;
`;

const SectionHead = styled.h2`
  display: flex;
  align-items: center;
  height: 38px;
  margin: 0;
  padding-top: 3px;
  gap: 8px;
  font: 400 20px "Liberation Sans", sans-serif;
  color: #fff;
  svg {
    margin: 0 2px 0 auto;
  }
`;

const SectionCaret = styled(Caret)`
  border-width: 8px 8px 0 8px;
  border-top-color: #fff;
`;

const ToolGrid = styled.div`
  display: grid;
  grid-template-columns: repeat(3, 44px);
  grid-auto-rows: 64px;
  column-gap: 16px;
  margin-left: -2px;
`;

const PaletteTool = styled.button`
  position: relative;
  display: grid;
  place-items: center;
  align-self: center;
  height: 44px;
  background: ${({ $active }) => ($active ? "#303440" : "none")};
  ${({ $more }) =>
    $more &&
    css`
      &::after {
        content: "";
        position: absolute;
        right: 0;
        bottom: 0;
        border: 4px solid #a5a7ab;
        border-top-color: transparent;
        border-left-color: transparent;
      }
    `}
`;

const PaletteFoot = styled.div`
  flex: none;
  display: flex;
  align-items: center;
  gap: 34px;
  height: 47px;
  padding: 4px 0 0 20px;
`;

// a trailing "+" marks a tool with a fly-out
const sections = [
  ["Draw", "line polyline circle*+ rect+ arc+ spline+ centerline+ ray+ ellipse+ revcloud+ point+ breakline"],
  ["Hatch", "hatch hatchEdit+ gradient boundary wipeout region"],
  ["Block", "createBlock insertBlock editBlock editAttr+ tag blockProps saveBlock addBlock syncAttr attrView replaceBlock"],
  [
    "Modify",
    "move copy mirror rotate scaleSel trim+ fillet+ offset array+ stretch3d stretch draworder scale breakAt+ join changeSpace extract broom",
  ],
  ["Text", "text textStyle textUnder textConvert spell findText fieldText updateText pdfText"],
];

const ToolPalette = () => (
  <Palette>
    <TabStrip>
      <Tab $width={57} $left aria-label="Drafting">
        <Icon name="drafting" size={30} />
      </Tab>
      <Tab $width={67} $bg="#2f323e" aria-label="Modeling">
        <Icon name="cube" size={28} />
      </Tab>
      <Tab $grow $dim aria-label="More tool sets">
        »
      </Tab>
    </TabStrip>
    <PaletteBody>
      {sections.map(([title, tools]) => (
        <Section key={title}>
          <SectionHead>
            <SectionCaret />
            {title}
            <Icon name="gear" size={19} />
          </SectionHead>
          <ToolGrid>
            {tools.split(" ").map((tool) => {
              const name = tool.replace(/[*+]/g, "");
              return (
                <PaletteTool key={name} aria-label={name} $active={tool.includes("*")} $more={tool.includes("+")}>
                  <Icon name={name} />
                </PaletteTool>
              );
            })}
          </ToolGrid>
        </Section>
      ))}
    </PaletteBody>
    <PaletteFoot>
      <Icon name="plus" size={24} />
      <Icon name="listMenu" size={28} />
    </PaletteFoot>
  </Palette>
);

/* ---------- model space ---------- */

const Canvas = styled.main`
  position: relative;
  flex: 1;
  min-height: 0;
  overflow: hidden;
  background: #393f4c;
`;

const Sketch = styled.svg`
  position: absolute;
  inset: 0;
  width: 100%;
  height: 100%;
  .thin * {
    vector-effect: non-scaling-stroke;
  }
`;

const ViewLabels = styled.div`
  position: absolute;
  left: 27px;
  top: 7px;
  display: flex;
  align-items: center;
  height: 36px;
  color: #9a9c9f;
  font: 500 23px "Noto Sans", sans-serif;
  button {
    padding: 0 17px 0 12px;
    height: 28px;
    line-height: 28px;
    border-left: 2px solid #8c8e92;
  }
  button:first-child {
    padding: 0 25px 0 0;
    border: 0;
  }
`;

const Compass = styled.svg`
  position: absolute;
  top: 28px;
  right: 30px;
`;

// one loop above and one below the middle for every 12 units
const batting = () => {
  let d = "M331 369";
  for (let c = 337; c < 1534; c += 12) {
    d += `L${c - 5} 363A5 5 0 0 1 ${c + 5} 363L${c} 375A5 5 0 0 0 ${c + 11} 375`;
  }
  return d;
};

const strips = (x, y, w, h, vertical) => {
  let d = `M${x} ${y}h${w}v${h}h${-w}z`;
  if (vertical) {
    for (let i = 15; i < w - 2; i += 15) d += `M${x + i} ${y}v${h}`;
  } else {
    for (let i = 15; i < h - 2; i += 15) d += `M${x} ${y + h - i}h${w}`;
  }
  return d;
};

const cols = [[334, 90], [424, 90], [514, 89], [603, 25]];
const rows = [[431, 25], [456, 90], [546, 89], [635, 90]];

const bigStones = [
  [831, 335], [968, 373], [1107, 410], [1247, 448], [848, 590], [986, 628], [1126, 664], [1265, 702], [865, 847],
  [1004, 883], [1143, 920], [1282, 957], [882, 1102], [1021, 1138], [1161, 1175], [1335, 1035],
];
const upStones = [
  [888, 312], [982, 325], [1075, 339], [1168, 353], [1262, 367], [906, 480], [1000, 493], [1093, 507], [1186, 521],
  [1280, 535], [831, 635], [925, 648], [1018, 661], [1111, 676], [1204, 690], [1298, 704], [849, 803], [943, 817],
  [1036, 830], [1129, 844], [1222, 858], [1316, 872], [868, 970], [961, 985], [1054, 998], [1148, 1013], [1241, 1027],
  [886, 1138], [979, 1153], [1072, 1167],
];
const leftStones = [
  [905, 322], [1092, 340], [1280, 355], [983, 411], [1170, 430], [874, 483], [1062, 502], [1248, 519], [952, 574],
  [1139, 592], [1326, 610], [842, 648], [1030, 663], [1216, 683], [920, 737], [1107, 755], [1294, 772], [997, 825],
  [1185, 845], [888, 900], [1076, 917], [1262, 935], [965, 988], [1153, 1008], [857, 1062], [1044, 1080], [1231, 1098],
  [935, 1152], [1121, 1168],
];
const specks = [
  861, 317, 930, 323, 939, 310, 1000, 326, 1005, 326, 1038, 318, 1189, 330, 1205, 323, 1262, 308, 1273, 308, 1333, 332, 873,
  356, 899, 346, 929, 348, 853, 372, 956, 349, 1025, 356, 1066, 360, 1137, 338, 1167, 369, 1206, 341, 1304, 377, 1336, 368, 873,
  402, 882, 419, 939, 387, 961, 399, 1005, 366, 1087, 389, 1118, 381, 1178, 387, 1207, 399, 1313, 387, 1281, 404, 835, 432, 838,
  443, 907, 437, 923, 427, 954, 416, 976, 440, 1005, 408, 1011, 438, 1043, 446, 1085, 437, 1136, 414, 1240, 424, 1273, 431, 1293,
  424, 937, 462, 970, 494, 934, 497, 888, 513, 1001, 458, 1003, 518, 1085, 456, 1085, 470, 1109, 454, 1135, 458, 1136, 489, 1167,
  443, 1201, 470, 1265, 460, 1320, 468, 857, 521, 922, 508, 1033, 522, 1099, 546, 1215, 521, 1234, 497, 1300, 507, 1333, 515, 870,
  551, 878, 551, 948, 555, 947, 537, 1017, 561, 1050, 558, 1080, 567, 1068, 579, 1157, 569, 1203, 545, 1231, 527, 1261, 541, 1312,
  579, 838, 575, 887, 593, 906, 582, 976, 585, 1001, 594, 1093, 589, 1116, 572, 1134, 603, 1180, 608, 1184, 600, 1186, 614, 1227,
  575, 1230, 591, 1252, 605, 1263, 591, 1266, 605, 1296, 582, 867, 624, 936, 612, 933, 629, 1003, 601, 1066, 636, 1065, 649, 1085,
  645, 1131, 638, 1170, 640, 1200, 621, 1310, 660, 852, 684, 866, 699, 901, 669, 883, 705, 932, 684, 960, 675, 1010, 655, 1047,
  680, 1064, 680, 1109, 705, 1130, 714, 1146, 697, 1160, 716, 1195, 689, 1236, 693, 1311, 671, 1330, 664, 949, 740, 983, 735, 998,
  743, 1031, 722, 1064, 738, 1068, 726, 1127, 734, 1159, 737, 1197, 744, 1244, 755, 1263, 756, 1290, 738, 1327, 740, 867, 762, 864,
  773, 897, 782, 970, 780, 1014, 771, 1080, 789, 1104, 801, 1129, 787, 1162, 773, 1228, 780, 1283, 756, 917, 830, 929, 820, 923,
  814, 926, 832, 995, 817, 1062, 824, 1127, 861, 1195, 847, 1203, 833, 1209, 846, 1234, 838, 1259, 817, 1262, 833, 1272, 844, 1300,
  835, 1328, 825, 833, 847, 914, 911, 927, 907, 940, 902, 963, 899, 1010, 908, 1045, 881, 1061, 877, 1079, 873, 1113, 880, 1175,
  877, 1257, 902, 1256, 914, 1324, 890, 852, 938, 862, 922, 1035, 941, 1090, 951, 1120, 937, 1166, 921, 1191, 922, 1218, 924, 1287,
  930, 1314, 967, 872, 990, 860, 998, 880, 998, 846, 1008, 914, 1016, 928, 986, 993, 965, 1010, 968, 1052, 965, 1118, 965, 1191,
  992, 1237, 978, 1286, 990, 984, 1022, 1008, 1046, 1011, 1052, 1056, 1028, 1096, 1020, 1097, 1031, 1174, 1014, 1194, 1036, 1193,
  1046, 1262, 1025, 1318, 1020, 872, 1045, 943, 1047, 934, 1063, 895, 1077, 924, 1057, 1000, 1065, 1061, 1052, 1090, 1059, 1122,
  1085, 1150, 1060, 1172, 1070, 1218, 1067, 1262, 1072, 1306, 1075, 845, 1088, 857, 1088, 1058, 1101, 1168, 1101, 1319, 1098, 857,
  1146, 859, 1162, 990, 1115, 957, 1150, 1068, 1136, 1109, 1148, 1175, 1137, 1237, 1160, 1263, 1158, 1303, 1146, 1320, 1153, 1003,
  1178, 1187, 1181, 1312, 1181,
];
const speckPath = specks.reduce((d, v, i) => (i % 2 ? `${d} ${v - 3}h4v7h-4z` : `${d}M${v - 2}`), "");

const cobble =
  "M564 732L591 743L601 775L591 808L564 819L537 808L526 775L537 743z" +
  "M615 757L650 753L684 765V775L671 799L628 802L612 775z" +
  "M662 814L674 811L692 821L667 841z" +
  "M668 860L683 838L718 842L730 858L731 870L724 894L680 888z" +
  "M564 861L604 810L644 814L662 858L650 914L613 950L578 947L565 912z" +
  "M466 720L496 674L541 674L562 692L556 729L519 750L478 748z";

const stone = (d) => ([x, y]) => `M${x} ${y}${d}`;

const Drawing = () => (
  <Sketch fill="none" stroke="#e9ebee" strokeWidth="1.5" aria-label="Drawing2">
    <g transform="translate(-172 -164)">
      <g stroke="#363c49">
        {[334, 628, 922, 1216, 1510, 1804, 2098, 2392].map((x) => (
          <path key={x} d={`M${x} 0V3000`} />
        ))}
        {[431, 725, 1019, 1313].map((y) => (
          <path key={y} d={`M0 ${y}H5000`} />
        ))}
      </g>
      <path d="M335 0V431" stroke="#38663a" />
      <path d="M628 726H5000" stroke="#5c343c" />

      <path d="M331 356.5H1540V382H331z" />
      <path d={batting()} strokeWidth="2" stroke="#fff" />

      <path
        d={rows
          .map(([y, h], r) => cols.map(([x, w], c) => strips(x, y, w, h, (r + c) % 2 === 1)).join(""))
          .join("")}
      />
      <path d="M515 470h70v113h-70z" fill="#393f4c" />
      <path d="M335 624V725H435" stroke="#fff" strokeWidth="2" />
      <path d="M326 714h19v18h-19zM339 590l12 13l12-13M351 603v12M444 696l25 25M469 696l-25 25" stroke="#fff" />

      <path d="M775 431H1070V725H775z" />
      <g className="thin" transform="translate(300 330) scale(.574 .33333)">
        <path d={bigStones.map(stone("m2 -14l5 25l-13 0z")).join("")} />
        <path d={upStones.map(stone("m0 -9l4 16l-9 1z")).join("")} />
        <path d={leftStones.map(stone("m-6 -1l9 -7l1 16z")).join("")} />
        <path d={speckPath} fill="#fff" stroke="none" />
      </g>

      <path d="M1243 432H1538V727H1243z" />

      <path d="M1647 434H1997V729H1647z" />
      <path d="M1764 434A328 328 0 0 1 1647 532M1881 434A657 657 0 0 1 1647 631M1997 434A985 985 0 0 1 1647 729M1997 532A657 657 0 0 1 1764 729M1997 631A328 328 0 0 1 1881 729" />

      <g className="thin" transform="translate(680 840) scale(.44643 .33333)">
        <clipPath id="paving">
          <path d="M826 491L1091 764L674 1013L397 713z" />
        </clipPath>
        <path d="M424 77L1440 1123M55 349L997 1360M185 824L1101 349M440 1154L1296 642" />
        <g clipPath="url(#paving)">
          {[-1, 0, 1].map((j) =>
            [-2, -1, 0, 1, 2, 3].map((i) => (
              <path key={`${i}${j}`} d={cobble} transform={`translate(${i * 167.5} ${j * 225})`} />
            ))
          )}
        </g>
      </g>

      <circle cx="2166" cy="1057" r="178" stroke="#fff" strokeWidth="7" />
      <circle cx="2166" cy="1057" r="162" />
      <circle cx="2166" cy="1057" r="125" />
      <path d="M2018 965L2317 1149M2075 1209L2166 1057" />
      <path d="M2166 1057L2263 899" stroke="#fff" strokeWidth="19" />

      <path d="M2120 624v66M2120 703v66M2048 696h66M2127 696h66M2114 690h13v13h-13z" stroke="#a9c940" />
    </g>
  </Sketch>
);

const ViewCube = () => (
  <Compass width="276" height="290" viewBox="0 0 276 290" fontFamily="Liberation Sans, sans-serif" fontWeight="700">
    <circle cx="144" cy="136" r="107" fill="none" stroke="#5b626d" strokeWidth="30" />
    <rect x="92" y="84" width="103" height="103" fill="#b2b4b9" />
    <rect x="112" y="104" width="64" height="64" fill="#a5acb6" />
    <text x="144" y="145" textAnchor="middle" fontSize="22" fill="#5d6571">
      TOP
    </text>
    <g fill="#b3b6bb" stroke="#535a65" strokeWidth="3" paintOrder="stroke" fontSize="44" textAnchor="middle">
      <text x="144" y="39">N</text>
      <text x="144" y="264">S</text>
      <text x="30" y="152">W</text>
      <text x="256" y="152">E</text>
    </g>
  </Compass>
);

const WcsButton = styled.button`
  position: absolute;
  top: 341px;
  right: 111px;
  display: flex;
  align-items: center;
  gap: 14px;
  height: 24px;
  width: 102px;
  padding-left: 9px;
  border-radius: 7px;
  background: #727c86;
  color: #38404c;
  font: 400 21px "Liberation Sans", sans-serif;
`;

const CommandPanel = styled.div`
  position: absolute;
  bottom: 0;
  left: 642px;
  width: 1000px;
  color: #b5b8bd;
  font: 400 20px/30px "Noto Sans", sans-serif;
`;

const History = styled.div`
  height: 169px;
  margin-left: 80px;
  padding: 12px 10px 0 10px;
  background: #3b4452;
  position: relative;
`;

const HistoryLog = styled.div`
  display: flex;
  flex-direction: column;
  justify-content: flex-end;
  height: 157px;
  overflow: hidden;
  white-space: pre;
  p {
    margin: 0;
  }
`;

const HistoryThumb = styled.i`
  position: absolute;
  right: 11px;
  bottom: 4px;
  width: 8px;
  height: 40px;
  border-radius: 4px;
  background: #94969b;
`;

const Prompt = styled.label`
  display: flex;
  align-items: center;
  gap: 8px;
  height: 50px;
  padding: 0 19px 0 17px;
  background: #3b4452;
  input {
    flex: 1;
    font-style: italic;
    font-size: 23px;
    margin-left: 18px;
  }
  input::placeholder {
    color: #9a9ea6;
    opacity: 1;
  }
  input + ${Caret} {
    margin-right: 14px;
  }
`;

const history = [
  "Specify next point or [Undo]: *Cancel* point or option",
  "Command: ucs",
  "Current ucs name:  *NO NAME*",
  "Specify origin of UCS or [Face/NAmed/OBject/Previous/View/World/X/Y/Z/ZAxis] <World>:",
  "world",
  "Command: 1",
];

/* ---------- side panel ---------- */

const SidePanel = styled.aside`
  flex: none;
  display: flex;
  flex-direction: column;
  width: 474px;
  border-left: 2px solid #2f3440;
  background: #3b4452;
`;

const PanelBody = styled.div`
  flex: 1;
  min-height: 0;
  display: flex;
  flex-direction: column;
  padding: 0 22px 16px 21px;
`;

const PanelHead = styled.div`
  display: flex;
  align-items: center;
  justify-content: space-between;
  height: 33px;
  h2 {
    margin: 0;
    font-size: 23px;
    font-weight: 500;
  }
`;

const LayerTools = styled.div`
  display: flex;
  justify-content: space-between;
  padding: 32px 5px 22px 6px;
`;

const Field = styled.span`
  position: relative;
  display: flex;
  align-items: center;
  flex: ${({ $fixed }) => ($fixed ? "none" : "1")};
  width: ${({ $fixed }) => ($fixed ? `${$fixed}px` : "auto")};
  min-width: 0;
  height: ${({ $tall }) => ($tall ? 52 : 38)}px;
  padding-left: ${({ $tight }) => ($tight ? 6 : 12)}px;
  border: 2px solid #303844;
  border-radius: 5px;
  background: ${({ $off }) => ($off ? "#434c5d" : "#505a6f")};
  color: ${({ $off }) => ($off ? "#7c8391" : "#fff")};
  font-size: 22px;
  font-weight: 500;
  select,
  input {
    flex: 1;
    width: 0;
    height: 100%;
    appearance: none;
    outline: 0;
    opacity: 1;
  }
  ${Caret} {
    position: absolute;
    right: 8px;
    pointer-events: none;
  }
`;

const LayerField = styled(Field)`
  flex: none;
  margin: 0 -5px 3px -2px;
  padding-left: 18px;
  gap: 7px;
  select {
    margin-left: 20px;
  }
`;

const StateField = styled(Field)`
  flex: none;
  margin-right: -3px;
`;

const Bulb = styled.i`
  flex: none;
  width: 17px;
  height: 17px;
  margin-right: ${({ $gap }) => $gap || 0}px;
  border-radius: 50%;
  background: #d8d8d8;
`;

const Swatch = styled.i`
  flex: none;
  width: 18px;
  height: 18px;
  margin-left: ${({ $gap }) => $gap || 0}px;
  border: 2px solid #000;
  background: #fff;
`;

const Disclosure = styled.button`
  display: flex;
  align-items: center;
  gap: 24px;
  height: 53px;
  margin-bottom: 4px;
  padding-left: 6px;
  color: #c3c6cb;
  font-size: 22px;
`;

const LayerList = styled.div`
  height: 451px;
  flex: none;
  border: 1px solid #343b48;
  border-left: 2px solid #2f323e;
`;

const ListBody = styled.div`
  height: 420px;
  background: #4e586a;
  border-bottom: 2px solid #2b2f3b;
`;

const LayerTable = styled.table`
  width: 100%;
  table-layout: fixed;
  border-collapse: collapse;
  color: #fff;
  font-size: 22px;
  font-weight: 500;
  th {
    height: 47px;
    padding: 0;
    background: #2f323e;
    border-right: 2px solid #2a2d38;
    border-bottom: 2px solid #2a2d38;
  }
  th svg {
    margin: 0 auto;
  }
  th:last-child svg {
    margin-right: 2px;
  }
  td {
    height: 38px;
    padding: 0;
    background: #919daf;
  }
`;

const NameHead = styled.div`
  position: relative;
  display: flex;
  align-items: center;
  height: 45px;
  background: #4e586a;
  color: #c9ccd1;
  font-weight: 600;
  &::after {
    content: "";
    position: absolute;
    left: 50px;
    bottom: 0;
    border: 7px solid transparent;
    border-bottom: 9px solid #4a94ea;
    border-top: 0;
  }
`;

const RowLine = styled.i`
  display: block;
  height: 2px;
  margin-left: 14px;
  background: #fff;
`;

const BulbCell = styled.div`
  display: flex;
  justify-content: flex-end;
  padding-right: 17px;
`;

const NameCell = styled.div`
  display: flex;
  align-items: center;
  gap: 18px;
`;

const WeightCell = styled.td`
  text-align: left;
  text-indent: 13px;
`;

const ScrollX = styled.div`
  width: 351px;
  height: 10px;
  margin: 11px 0 0 3px;
  border-radius: 5px;
  background: #878d98;
`;

const LayerActions = styled.div`
  display: flex;
  align-items: center;
  gap: 28px;
  height: 52px;
  padding: 0 11px 0 12px;
  button:nth-child(5) {
    margin-left: auto;
  }
  button:last-child {
    display: flex;
    align-items: center;
    margin-left: -12px;
    gap: 2px;
  }
`;

const Search = styled.label`
  display: flex;
  align-items: center;
  gap: 10px;
  flex: none;
  height: 40px;
  padding: 0 10px;
  margin-bottom: 18px;
  border-radius: 9px;
  background: #fff;
  color: #222;
  font-size: 24px;
  svg {
    flex: none;
  }
  input {
    flex: 1;
    min-width: 0;
    outline: 0;
  }
  input::placeholder {
    color: #b9babd;
    opacity: 1;
  }
`;

const PropHead = styled(PanelHead)`
  height: 32px;
  margin: 0 -22px 18px -21px;
  padding: 0 18px 0 21px;
  border-top: 2px solid #2a2f3b;
  h2 {
    margin-right: auto;
  }
`;

const Segment = styled.div`
  display: flex;
  margin-right: 18px;
  border: 2px solid #2d323e;
  button {
    width: 57px;
    height: 24px;
    font-size: 18px;
    font-weight: 500;
    line-height: 22px;
    color: #7f8692;
  }
  button + button {
    width: 60px;
    background: #4e586a;
    color: #fff;
  }
  & + button {
    margin-right: 21px;
  }
`;

const PropArea = styled.div`
  flex: 1;
  min-height: 0;
  overflow: hidden;
  display: flex;
  justify-content: space-between;
  margin: 14px -2px 0 44px;
`;

const PropList = styled.div`
  width: 363px;
`;

const PropRow = styled.div`
  display: flex;
  align-items: center;
  height: 38px;
  margin-bottom: 8px;
  label {
    flex: none;
    width: 134px;
    margin-right: 20px;
    text-align: right;
    white-space: nowrap;
    color: #ccced3;
    font-size: 22px;
  }
`;

const ScrollY = styled.div`
  width: 10px;
  height: 306px;
  border-radius: 5px;
  background: #878d98;
`;

const LineSample = styled.i`
  width: 64px;
  height: 2px;
  margin-right: 28px;
  background: #fff;
`;

const ColorGap = styled.i`
  width: 22px;
`;

const TransField = styled(Field)`
  height: 34px;
  margin: 0 7px 0 5px;
  padding: 0 6px;
  border-radius: 0;
  border-left-color: #5f8fd6;
  input {
    text-align: right;
  }
  &::before {
    content: "";
    position: absolute;
    left: 54px;
    bottom: 2px;
    width: 2px;
    height: 10px;
    background: #7d8798;
  }
`;

const props = [
  ["Color", "ByLayer", "swatch"],
  ["Layer", "0"],
  ["Linetype", "ByLa...", "line"],
  ["Linetype sc...", "1", "input"],
  ["Lineweight", "ByLayer"],
  ["Transparency", "0", "transparency"],
  ["Text style", "Standard"],
  ["Dimension s...", "ISO-25"],
  ["Multileader...", "Standard"],
  ["Table style", "Standard"],
  ["Annotation s...", "1:1"],
];

const PropValue = ({ id, value, kind }) => {
  if (kind === "input") {
    return (
      <Field $tight>
        <input id={id} defaultValue={value} />
      </Field>
    );
  }
  if (kind === "transparency") {
    return (
      <>
        <TransField>
          <input id={id} defaultValue={value} />
        </TransField>
        <Field $fixed={78}>
          <Icon name="byLayer" size={26} />
          <select aria-label="Transparency source" />
          <Caret />
        </Field>
      </>
    );
  }
  return (
    <Field>
      {kind === "swatch" && (
        <>
          <Swatch $gap={4} />
          <ColorGap />
        </>
      )}
      {kind === "line" && <LineSample />}
      <select id={id} defaultValue={value}>
        <option>{value}</option>
      </select>
      <Caret />
    </Field>
  );
};

const layerTools =
  "layerCurrent layerMatch layerPrev layerIso layerUniso layerFreeze layerOff layerLock layerUnlock".split(" ");

const Side = () => (
  <SidePanel>
    <TabStrip>
      <Tab $width={105} aria-label="Layers">
        <Icon name="layersInfo" />
      </Tab>
      <Tab $width={105} $bg="#2f323e" aria-label="References">
        <Icon name="refs" />
      </Tab>
      <Tab $width={105} $bg="#2f323e" aria-label="Tool palettes">
        <ToolButton as="span">
          <Icon name="palette" />
          <Badge $inset />
        </ToolButton>
      </Tab>
      <Tab $width={109} $bg="#2f323e" aria-label="Empty tab" />
      <Tab $grow $dim aria-label="More panels">
        »
      </Tab>
    </TabStrip>
    <PanelBody>
      <PanelHead>
        <h2>Layers</h2>
        <button aria-label="Undock layers">
          <Icon name="dock" size={26} />
        </button>
      </PanelHead>
      <LayerTools>
        {layerTools.map((name) => (
          <ToolButton key={name} aria-label={name}>
            <Icon name={name} />
          </ToolButton>
        ))}
      </LayerTools>
      <LayerField $tall>
        <Bulb $gap={4} />
        <Icon name="lockDim" size={28} />
        <Icon name="flakeDim" size={28} />
        <Swatch />
        <select aria-label="Current layer">
          <option>0</option>
        </select>
        <Caret />
      </LayerField>
      <StateField $tall>
        <select aria-label="Layer state">
          <option>Unsaved Layer State</option>
        </select>
        <Caret />
      </StateField>
      <Disclosure>
        <svg width="18" height="10" fill="none" stroke="#c3c6cb" strokeWidth="3">
          <path d="M1 1l8 7l8-7" />
        </svg>
        Hide Layer List
      </Disclosure>
      <LayerList>
        <ListBody>
          <LayerTable>
            <colgroup>
              <col width="63" />
              <col width="116" />
              <col width="44" />
              <col width="45" />
              <col width="94" />
              <col />
            </colgroup>
            <thead>
              <tr>
                <th aria-label="Visible">
                  <Icon name="eye" />
                </th>
                <th>
                  <NameHead>
                    <Icon name="nameBox" />
                    N...
                    <Icon name="sort" />
                  </NameHead>
                </th>
                <th aria-label="Freeze">
                  <Icon name="flake" size={28} />
                </th>
                <th aria-label="Lock">
                  <Icon name="lock" size={32} />
                </th>
                <th aria-label="Lineweight">
                  <Icon name="weight" />
                </th>
                <th aria-label="Linetype">
                  <Icon name="linetype" />
                </th>
              </tr>
            </thead>
            <tbody>
              <tr>
                <td>
                  <BulbCell>
                    <Bulb />
                  </BulbCell>
                </td>
                <td>
                  <NameCell>
                    <Swatch />0
                  </NameCell>
                </td>
                <td />
                <td />
                <WeightCell>De...</WeightCell>
                <td>
                  <RowLine />
                </td>
              </tr>
            </tbody>
          </LayerTable>
        </ListBody>
        <ScrollX />
      </LayerList>
      <LayerActions>
        {["newLayer", "layerStates", "folder", "folderZap", "minus"].map((name) => (
          <button key={name} aria-label={name}>
            <Icon name={name} />
          </button>
        ))}
        <button aria-label="Columns">
          <Icon name="columns" />
          <Caret />
        </button>
      </LayerActions>
      <Search>
        <svg width="35" height="26" fill="none" stroke="#222" strokeWidth="2">
          <circle cx="10" cy="11" r="9" />
          <path d="M16 18l8 7M25 10l5 5l5-5" />
        </svg>
        <input placeholder="Search for layer" aria-label="Search for layer" />
      </Search>
      <PropHead>
        <h2>Properties</h2>
        <Segment>
          <button>All</button>
          <button>My</button>
        </Segment>
        <button aria-label="Customize">
          <Icon name="notes" size={28} />
        </button>
        <button aria-label="Undock properties">
          <Icon name="dock" size={26} />
        </button>
      </PropHead>
      <StateField $off>
        <select aria-label="Selection" disabled>
          <option>Model Space</option>
        </select>
        <Caret $color="#6f7786" />
      </StateField>
      <PropArea>
        <PropList>
          {props.map(([label, value, kind]) => (
            <PropRow key={label}>
              <label htmlFor={label}>{label}</label>
              <PropValue id={label} value={value} kind={kind} />
            </PropRow>
          ))}
        </PropList>
        <ScrollY />
      </PropArea>
    </PanelBody>
  </SidePanel>
);

/* ---------- status bar ---------- */

const Workspace = styled.div`
  flex: 1;
  min-width: 0;
  display: flex;
  flex-direction: column;
`;

const Upper = styled.div`
  flex: 1;
  min-height: 0;
  display: flex;
`;

const Center = styled.div`
  flex: 1;
  min-width: 0;
  display: flex;
  flex-direction: column;
`;

const StatusBar = styled.footer`
  flex: none;
  display: flex;
  align-items: center;
  height: 47px;
  border-top: 2px solid #242936;
  background: #3a4150;
`;

const LayoutTab = styled.button`
  align-self: stretch;
  padding: 0 ${({ $active, $add }) => ($active ? 25 : $add ? 14 : 18)}px 4px;
  border-right: ${({ $add }) => ($add ? 0 : "2px solid #2b303c")};
  background: ${({ $active }) => ($active ? "#515b72" : "none")};
  color: ${({ $active }) => ($active ? "#fff" : "#a9adb5")};
  font-size: 21px;
  font-weight: ${({ $active }) => ($active ? 600 : 500)};
`;

const Coords = styled.output`
  align-self: stretch;
  display: flex;
  align-items: center;
  margin-left: auto;
  padding: 0 9px 0 28px;
  border-left: 2px solid #242936;
  color: #a4a7ae;
  font-size: 22px;
  white-space: pre;
`;

const Toggles = styled.div`
  display: flex;
  align-items: center;
  gap: 4px;
  padding-right: 10px;
`;

const Toggle = styled.button`
  display: grid;
  place-items: center;
  width: 40px;
  height: 40px;
  background: ${({ $on }) => ($on ? "#6d8fbf" : "none")};
`;

const ScaleButton = styled.button`
  display: flex;
  align-items: center;
  gap: 6px;
  width: 52px;
  margin-left: -4px;
  margin-right: 4px;
  color: #a4a7ae;
  font-size: 21px;
`;

const toggles =
  "grid* snapGrid ortho polar dynInput lineweight checker cycling angle osnap* annoVisible* annoAuto annoScale".split(" ");

// a trailing "!" puts the orange marker on the button
const toolbar = [
  "newFile open! save saveAs",
  "undo redo",
  "print plot! batch pageSetup",
  "importFile exportFile attach saveWeb",
  "zoomWindow pan orbit",
  "properties quickSelect group copyBlock purge count!",
  "compare share! activity!",
];

const App = () => (
  <Window>
    <GlobalStyle />
    <Frame>
      <TitleBar>
        <Lights>
          <Light $color="#ed6a5e" $dot="#6a0f0b" aria-label="Close" />
          <Light $color="#f5bf4f" aria-label="Minimize" />
          <Light $color="#61c554" aria-label="Zoom" />
        </Lights>
        <Title>
          <Icon name="appFile" size={30} />
          <span>Autodesk AutoCAD 2023</span>
          <span>Drawing2.dwg</span>
        </Title>
        <Account>
          <Icon name="user" size={27} />
          Mafalda Concei...
          <Caret />
        </Account>
      </TitleBar>
      <Toolbar>
        {toolbar.map((group) => (
          <ToolGroup key={group}>
            {group.split(" ").map((tool) => (
              <ToolButton key={tool} aria-label={tool.replace("!", "")}>
                <Icon name={tool.replace("!", "")} />
                {tool.endsWith("!") && <Badge />}
              </ToolButton>
            ))}
          </ToolGroup>
        ))}
      </Toolbar>
      <Body>
        <ToolPalette />
        <Workspace>
          <Upper>
            <Center>
              <TabStrip>
                <Tab $width={47} aria-label="Start">
                  <Icon name="startGrid" size={29} />
                </Tab>
                <Tab $width={46} aria-label="New drawing">
                  <Icon name="plus" size={24} />
                </Tab>
                <Tab $width={258} $left $bg="#4e586e">
                  Drawing2*
                </Tab>
              </TabStrip>
              <Canvas>
                <Drawing />
                <ViewLabels>
                  <button>+</button>
                  <button>Top</button>
                  <button>2D Wireframe</button>
                </ViewLabels>
                <ViewCube />
                <WcsButton>
                  WCS
                  <svg width="22" height="14" fill="none" stroke="#38404c" strokeWidth="2">
                    <path d="M2 2h18l-9 10z" />
                  </svg>
                </WcsButton>
                <CommandPanel>
                  <History>
                    <HistoryLog>
                      {history.map((line) => (
                        <p key={line}>{line}</p>
                      ))}
                    </HistoryLog>
                    <HistoryThumb />
                  </History>
                  <Prompt>
                    <svg width="27" height="24" fill="none" stroke="#b5b8bd" strokeWidth="3">
                      <path d="M2 4l8 5l-8 5M14 19h12" />
                    </svg>
                    <Caret $color="#a5a8ae" />
                    <input placeholder="Type a command" aria-label="Command" />
                    <Caret $color="#94979d" />
                    <Icon name="shareBox" size={28} />
                  </Prompt>
                </CommandPanel>
              </Canvas>
            </Center>
            <Side />
          </Upper>
          <StatusBar>
            <LayoutTab $active>Model</LayoutTab>
            <LayoutTab $add aria-label="New layout">
              <Icon name="plus" size={24} />
            </LayoutTab>
            <LayoutTab>Layout1</LayoutTab>
            <LayoutTab>Layout2</LayoutTab>
            <Coords>60.7262, 0.9156 , 0.0000</Coords>
            <Toggles>
              {toggles.map((t) => (
                <Toggle key={t} $on={t.endsWith("*")} aria-label={t.replace("*", "")}>
                  <Icon name={t.replace("*", "")} />
                </Toggle>
              ))}
              <ScaleButton>
                1:1
                <Caret />
              </ScaleButton>
              <Toggle aria-label="Workspace">
                <Icon name="workspace" />
              </Toggle>
              <Toggle aria-label="Customize">
                <Icon name="gear" size={30} />
              </Toggle>
            </Toggles>
          </StatusBar>
        </Workspace>
      </Body>
    </Frame>
  </Window>
);

export default App;
